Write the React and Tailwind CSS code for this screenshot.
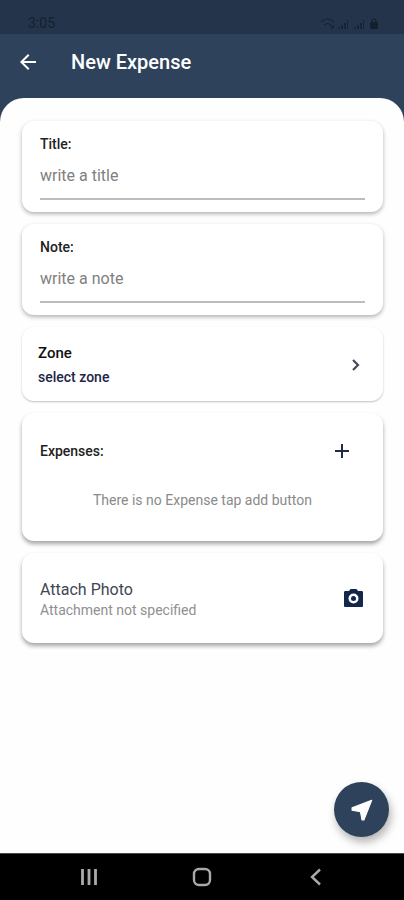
import React, { useState } from 'react';

function Card({ className = '', children }) {
  return (
    <section className={`rounded-xl bg-white px-[18px] ${className}`}>
      {children}
    </section>
  );
}

function TextField({ id, label, placeholder }) {
  const [value, setValue] = useState('');

  return (
    <Card className="pt-[13px] pb-3 shadow-[0_2px_4px_rgba(0,0,0,0.3)]">
      <label htmlFor={id} className="block text-sm leading-5 font-medium text-[#222222]">
        {label}
      </label>
      <input
        id={id}
        type="text"
        value={value}
        placeholder={placeholder}
        onChange={(e) => setValue(e.target.value)}
        className="block h-[46px] w-full border-b-2 border-[#bdbdbd] bg-transparent pb-[2px] text-base text-gray-800 outline-none placeholder:text-[#808080]"
      />
    </Card>
  );
}

function StatusBar() {
  return (
    <div className="flex h-[34px] items-end justify-between bg-[#24344b] pr-[25px] pb-[1px] pl-7 text-[#141f30]">
      <span className="text-sm leading-5">3:05</span>
      <svg viewBox="0 0 60 14" className="mb-[2px] h-[14px] w-[60px]" fill="currentColor" aria-hidden="true">
        <g fill="none" stroke="currentColor" strokeWidth="1.2" opacity="0.7">
          <path d="M2 5c4-4 9-4 13 0M5 8c2-2 5-2 7 0" />
          <path d="M11 8l4 3M15 8l-3 4" />
        </g>
        <g opacity="0.75">
          <path d="M19 10h2v2h-2zM22 8h2v4h-2zM25 6h2v6h-2zM28 3h1v9h-1z" />
          <path d="M35 10h2v2h-2zM38 8h2v4h-2zM41 6h2v6h-2zM44 3h1v9h-1z" />
        </g>
        <rect x="51" y="5" width="8" height="7" rx="1" />
        <path d="M53 6V4a2 2 0 0 1 4 0v2" fill="none" stroke="currentColor" strokeWidth="1.2" />
      </svg>
    </div>
  );
}

function SystemNav() {
  return (
    <nav className="grid h-[47px] grid-cols-[1fr_48px_1fr] items-center border-t border-[#4a4a4a] bg-black text-[#a9a9a9]">
      <button type="button" aria-label="Recent apps" className="mr-[65px] flex h-11 w-12 items-center justify-center justify-self-end">
        <svg viewBox="0 0 18 18" className="h-[18px] w-[18px]" fill="none" stroke="currentColor" strokeWidth="2.8">
          <path d="M2.500 1v16M9 1v16M15.500 1v16" />
        </svg>
      </button>
      <button type="button" aria-label="Home" className="flex h-11 w-12 items-center justify-center">
        <svg viewBox="0 0 20 20" className="h-5 w-5" fill="none" stroke="currentColor" strokeWidth="2.4">
          <rect x="2" y="2" width="16" height="16" rx="5" />
        </svg>
      </button>
      <button type="button" aria-label="Back" className="ml-[65px] flex h-11 w-12 items-center justify-center">
        <svg viewBox="0 0 18 18" className="h-[18px] w-[18px]" fill="none" stroke="currentColor" strokeWidth="2.4">
          <path d="M14 1.500L6 9l8 7.500" />
        </svg>
      </button>
    </nav>
  );
}

export default function App() {
  return (
    <div className="relative flex min-h-screen flex-col bg-[#2e435b] font-['Roboto',sans-serif]">
      <StatusBar />

      {/* App bar */}
      <header className="flex h-16 items-start gap-[31px] pt-3 pl-4 text-white">
        <button type="button" aria-label="Go back" className="flex h-8 w-6 items-center justify-center">
          <svg viewBox="0 0 24 24" className="h-6 w-6" fill="currentColor">
            <path d="M20 11H7.830l5.590-5.590L12 4l-8 8 8 8 1.410-1.410L7.830 13H20v-2z" />
          </svg>
        </button>
        <h1 className="text-xl leading-8 font-medium">New Expense</h1>
      </header>

      <main className="flex flex-1 flex-col gap-3 rounded-t-3xl bg-[#fefefe] pt-[23px] pr-[21px] pb-20 pl-[22px]">
        <TextField id="title" label="Title:" placeholder="write a title" />
        <TextField id="note" label="Note:" placeholder="write a note" />

        {/* Zone */}
        <button
          type="button"
          className="flex items-center justify-between rounded-xl bg-white pt-4 pb-[14px] pr-[18px] pl-4 text-left shadow-[0_1px_2px_rgba(0,0,0,0.25)]"
        >
          <span className="flex flex-col">
            <span className="text-[15px] leading-5 font-medium text-[#111111]">Zone</span>
            <span className="pt-1 text-sm leading-5 font-medium text-[#1d2546]">select zone</span>
          </span>
          <svg viewBox="0 0 20 20" className="h-5 w-5 text-[#454c59]" fill="none" stroke="currentColor" strokeWidth="2.2">
            <path d="M8 5l5 5-5 5" />
          </svg>
        </button>

        {/* Expenses */}
        <Card className="pt-[22px] pb-[31px] shadow-[0_3px_4px_rgba(0,0,0,0.35)]">
          <div className="flex items-center justify-between pr-[11px]">
            <h2 className="text-sm leading-5 font-medium text-[#222222]">Expenses:</h2>
            <button type="button" aria-label="Add expense" className="flex h-8 w-6 items-center justify-center text-[#1d2b47]">
              <svg viewBox="0 0 24 24" className="h-6 w-6" fill="none" stroke="currentColor" strokeWidth="2">
                <path d="M12 5v14M5 12h14" />
              </svg>
            </button>
          </div>
          <p className="pt-[23px] text-center text-sm leading-5 text-[#8a8a8a]">
            There is no Expense tap add button
          </p>
        </Card>

        {/* Attachment */}
        <Card className="flex items-center justify-between pt-[27px] pb-[23px] shadow-[0_3px_4px_rgba(0,0,0,0.35)]">
          <div>
            <h2 className="text-base leading-5 text-[#404654]">Attach Photo</h2>
            <p className="text-sm leading-5 text-[#909090]">Attachment not specified</p>
          </div>
          <button type="button" aria-label="Take photo" className="flex h-10 w-6 items-start justify-center pt-[6px] text-[#14274a]">
            <svg viewBox="0 0 24 24" className="h-6 w-6" fill="currentColor">
              <circle cx="12.500" cy="12.500" r="2.500" />
              <path
                fillRule="evenodd"
                d="M9.500 3L8 5H4.500C3.500 5 3 5.500 3 6.500v13c0 1 .5 1.500 1.500 1.500h16c1 0 1.500-.5 1.500-1.500v-13c0-1-.5-1.500-1.500-1.500H17l-1.500-2h-6zm3 4.500a5 5 0 1 1 0 10 5 5 0 0 1 0-10z"
              />
            </svg>
          </button>
        </Card>
      </main>

      <button
        type="button"
        aria-label="Send expense"
        className="absolute right-[15px] bottom-[63px] flex h-[55px] w-[55px] items-center justify-center rounded-full bg-[#2e435b] text-white shadow-[2px_5px_8px_rgba(0,0,0,0.3)]"
      >
        <svg viewBox="0 0 24 24" className="h-7 w-7" fill="currentColor" stroke="currentColor" strokeWidth="1" strokeLinejoin="round">
          <path d="M20.300 3.700L3.500 10.200v1.900l7.200 1.400 1.300 7h1.600L20.300 3.700z" />
        </svg>
      </button>

      <SystemNav />
    </div>
  );
}
